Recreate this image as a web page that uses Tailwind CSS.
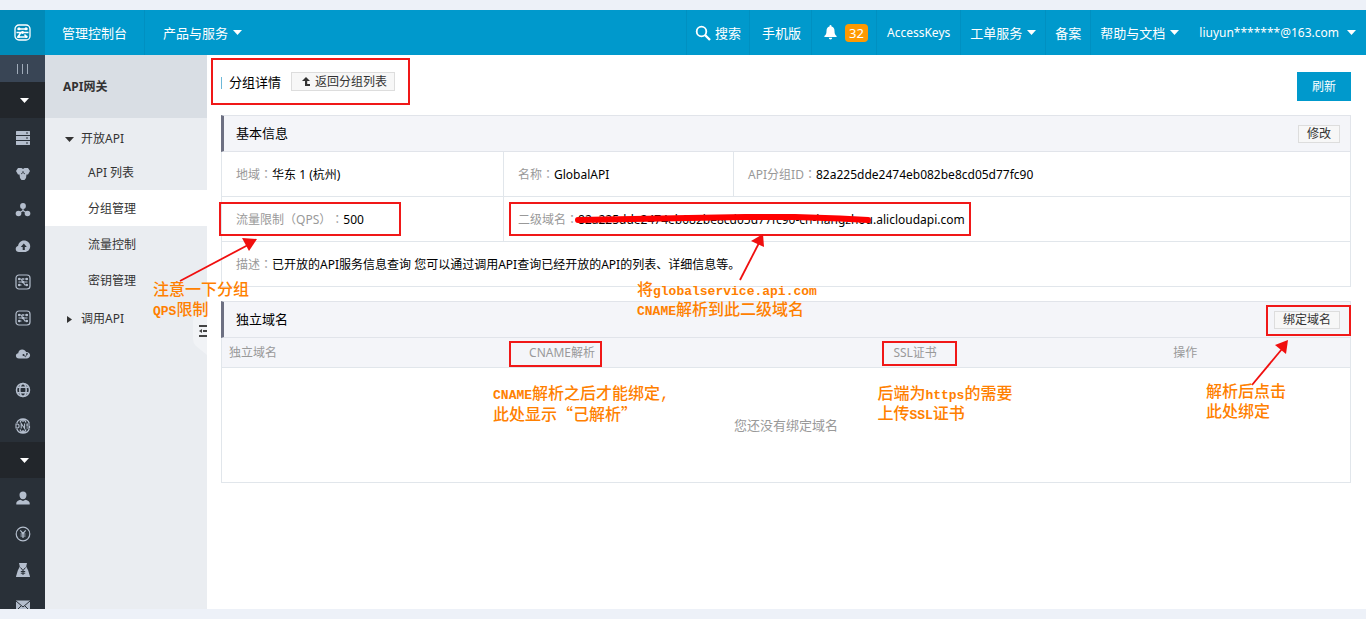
<!DOCTYPE html>
<html lang="zh-CN">
<head>
<meta charset="utf-8">
<meta name="viewport" content="width=device-width, initial-scale=1">
<title>API网关 - 分组详情</title>
<script src="https://cdn.jsdelivr.net/npm/@tailwindcss/browser@4"></script>
</head>
<body class="flex h-screen flex-col overflow-hidden bg-[#edf1f8] py-[10px] font-['Noto_Sans','Noto_Sans_CJK_SC',sans-serif] text-[12px] leading-[18px] text-[#333]">

<svg class="hidden" aria-hidden="true">
  <symbol id="caret" viewBox="0 0 9 5"><path d="M0 0h9L4.500 5z" fill="currentColor"/></symbol>
  <symbol id="gateway" viewBox="0 0 16 16"><rect x="1" y="1" width="14" height="14" rx="3" fill="none" stroke="currentColor" stroke-width="1.200"/><path d="M3 5h3.500M9.500 5H13M3 11h3.500M9.500 11H13M3.500 8h9M6 5l4 6" stroke="currentColor" stroke-width="1.200" fill="none"/><g fill="currentColor"><circle cx="4.200" cy="5" r="1.200"/><circle cx="8" cy="5" r="1"/><circle cx="11.800" cy="5" r="1.200"/><circle cx="4.200" cy="11" r="1.200"/><circle cx="8" cy="8" r="1.300"/><circle cx="11.800" cy="11" r="1.200"/></g></symbol>
</svg>

<header class="flex h-[45px] shrink-0 bg-[#0099cc] text-[13px] text-white">
  <a href="#" aria-label="首页" class="flex w-[45px] items-center justify-center bg-[#008ab8]">
    <svg class="size-[17px]" viewBox="0 0 17 17" fill="none" stroke="currentColor"><rect x="1" y="1" width="15" height="15" rx="4" stroke-width="1.300"/><path d="M3.500 5h10M2.500 8.500h12M6.500 9L4 13h8.500M10.500 10.500l2.500 3" stroke-width="1.500"/><g fill="currentColor" stroke="none"><circle cx="5" cy="4.800" r="1.500"/><circle cx="12" cy="4.800" r="1.500"/><circle cx="8.500" cy="8.500" r="1.400"/><circle cx="4.700" cy="12.700" r="1.300"/><circle cx="12.300" cy="12.700" r="1.300"/></g></svg>
  </a>
  <nav class="flex flex-1">
    <a href="#" class="flex items-center border-r border-[#0090c1] px-[17px]">管理控制台</a>
    <a href="#" class="flex items-center gap-[5px] px-[18px]">产品与服务 <svg class="h-[5px] w-[9px]"><use href="#caret"/></svg></a>
    <div class="ml-auto flex">
      <a href="#" class="flex items-center gap-1 border-x border-[#0090c1] px-2">
        <svg class="size-4" viewBox="0 0 16 16" fill="none" stroke="currentColor"><circle cx="6.500" cy="6.500" r="4.800" stroke-width="1.800"/><path d="M10 10l5 5" stroke-width="2.400"/></svg>搜索</a>
      <a href="#" class="flex items-center border-r border-[#0090c1] pl-3 pr-[10px]">手机版</a>
      <a href="#" aria-label="消息 32" class="flex items-center gap-2 border-r border-[#0090c1] pl-3 pr-2">
        <svg class="h-[15px] w-[13px]" viewBox="0 0 13 15" fill="currentColor"><path d="M6.500 0a1 1 0 0 1 1 1v.6C9.500 2.100 10.500 3.700 10.500 6c0 3 .8 4.200 2.100 5v1H.4v-1C1.700 10.200 2.500 9 2.500 6c0-2.300 1-3.900 3-4.400V1a1 1 0 0 1 1-1zM4.800 12.800h3.400a1.700 1.700 0 0 1-3.400 0z"/></svg>
        <span class="rounded bg-[#ff9900] px-1">32</span></a>
      <a href="#" class="flex items-center border-r border-[#0090c1] px-[10px] text-[12px]">AccessKeys</a>
      <a href="#" class="flex items-center gap-[5px] border-r border-[#0090c1] px-[9px]">工单服务 <svg class="h-[5px] w-[9px]"><use href="#caret"/></svg></a>
      <a href="#" class="flex items-center border-r border-[#0090c1] px-[9px]">备案</a>
      <a href="#" class="flex items-center gap-[5px] px-[9px]">帮助与文档 <svg class="h-[5px] w-[9px]"><use href="#caret"/></svg></a>
      <a href="#" class="flex items-center gap-2 pl-[11px] pr-[10px] text-[12px]">liuyun*******@163.com <svg class="h-[5px] w-[9px]"><use href="#caret"/></svg></a>
    </div>
  </nav>
</header>

<div class="flex min-h-0 flex-1">
  <nav aria-label="产品" class="flex w-[45px] shrink-0 flex-col overflow-hidden bg-[#293038] text-[#b4becd]">
    <button aria-label="收起" class="flex h-[27px] shrink-0 items-center justify-center gap-1 bg-[#394555]"><i class="h-[10px] w-px bg-[#a0abb9]"></i><i class="h-[10px] w-px bg-[#a0abb9]"></i><i class="h-[10px] w-px bg-[#a0abb9]"></i></button>
    <button aria-label="产品列表" class="flex h-9 shrink-0 items-center justify-center bg-[#22262b] pl-[3px] text-white"><svg class="h-[5px] w-[9px]"><use href="#caret"/></svg></button>
    <a href="#" aria-label="服务器" class="flex h-9 shrink-0 items-center justify-center pt-1"><svg class="size-4" viewBox="0 0 16 16"><path fill="currentColor" d="M1.500 1h13a.5.5 0 0 1 .5.500V5H1V1.500A.5.5 0 0 1 1.500 1zM1 6h14v4H1zM1 11h14v3.500a.5.5 0 0 1-.5.500h-13a.5.5 0 0 1-.5-.500z"/><path d="M11 3h2M11 8h2M11 13h2" stroke="#293038"/></svg></a>
    <a href="#" aria-label="数据库" class="flex h-9 shrink-0 items-center justify-center pt-1"><svg class="size-4" viewBox="0 0 16 16"><path fill="currentColor" d="M3 2h3.500L8 3 9.500 2H13l2 3-2 3.500h-1.500L11 12l-1.500 2h-3L5 12l-.5-3.500H3L1 5z"/><path d="M8 6.500l-2 1.500M8 6.500l2 1.500M8 5v1.500" stroke="#293038" stroke-width=".8"/></svg></a>
    <a href="#" aria-label="负载均衡" class="flex h-9 shrink-0 items-center justify-center pt-1"><svg class="size-4" viewBox="0 0 16 16"><g fill="currentColor"><circle cx="8" cy="4" r="2.900"/><circle cx="3.500" cy="11.500" r="2.800"/><circle cx="12.500" cy="11.500" r="2.800"/></g><path d="M8 4v4.500M8 8.500l-4.500 3M8 8.500l4.500 3" stroke="currentColor" stroke-width="1.200"/></svg></a>
    <a href="#" aria-label="存储" class="flex h-9 shrink-0 items-center justify-center pt-1"><svg class="size-4" viewBox="0 0 16 16"><path fill="currentColor" d="M4 14C2 14 .7 12.700.7 11c0-1.500 1-2.600 2.400-2.900C3.300 5 5.800 2.500 9 2.500c3.500 0 6.200 2.500 6.200 5.700 0 3.300-2.500 5.800-5.700 5.800z"/><path fill="#293038" d="M8.800 5.500L5.800 9h1.900v3h2.100V9h2z"/></svg></a>
    <a href="#" aria-label="API网关" class="flex h-9 shrink-0 items-center justify-center pt-1"><svg class="size-4"><use href="#gateway"/></svg></a>
    <a href="#" aria-label="网关" class="flex h-9 shrink-0 items-center justify-center pt-1"><svg class="size-4"><use href="#gateway"/></svg></a>
    <a href="#" aria-label="云监控" class="flex h-9 shrink-0 items-center justify-center pt-1"><svg class="size-4" viewBox="0 0 16 16"><path fill="currentColor" d="M4 12.500C2 12.500.9 11.300.9 9.800c0-1.400 1-2.400 2.300-2.500C3.400 5 5 3.500 7.200 3.500c1.900 0 3.200 1 3.900 2.500 2.300 0 4 1.300 4 3.300s-1.500 3.200-3.500 3.200z"/><circle cx="8.500" cy="9" r="1" fill="#293038"/><circle cx="12" cy="7.800" r=".9" fill="#293038"/><path d="M8.500 9l2 1.800L12 7.800" stroke="#293038" stroke-width=".8" fill="none"/></svg></a>
    <a href="#" aria-label="CDN" class="flex h-9 shrink-0 items-center justify-center pt-1"><svg class="size-4" viewBox="0 0 16 16" fill="none" stroke="currentColor" stroke-width="1.500"><circle cx="8" cy="8" r="6.500"/><ellipse cx="8" cy="8" rx="3.200" ry="6.500"/><path d="M2.500 5.300h11M2.500 10.700h11"/></svg></a>
    <a href="#" aria-label="DNS" class="flex h-9 shrink-0 items-center justify-center pt-1"><svg class="size-4" viewBox="0 0 16 16" fill="none" stroke="currentColor" stroke-width="1.300"><path d="M1.800 5a6.700 6.700 0 0 1 12.400 0M1.800 11a6.700 6.700 0 0 0 12.400 0M8 1.300V4M8 12v2.700M5 4.500C5.500 3 6.500 1.500 8 1.300c1.500.2 2.500 1.700 3 3.200M5 11.500c.5 1.500 1.500 3 3 3.200 1.500-.2 2.500-1.700 3-3.200"/><path d="M1 6v4h1.800l1.200-1V7L2.800 6zM6.200 10.500v-5l3.400 5v-5M15 6h-3v2h2.500v2h-3" stroke-width="1.100"/></svg></a>
    <button aria-label="用户中心" class="flex h-9 shrink-0 items-center justify-center bg-[#22262b] pl-[3px] text-white"><svg class="h-[5px] w-[9px]"><use href="#caret"/></svg></button>
    <a href="#" aria-label="账号" class="flex h-9 shrink-0 items-center justify-center pt-1"><svg class="size-4" viewBox="0 0 16 16" fill="currentColor"><path d="M8 1.500c2.300 0 3.500 1.400 3.500 3.500S10.300 9.300 8 9.300 4.500 7.100 4.500 5 5.700 1.500 8 1.500zM1.300 14.500V13c0-1.700 2.200-2.800 4.200-3.300L8 11l2.500-1.300c2 .5 4.200 1.600 4.200 3.300v1.500z"/></svg></a>
    <a href="#" aria-label="费用" class="flex h-9 shrink-0 items-center justify-center pt-1"><svg class="size-4" viewBox="0 0 16 16" fill="none" stroke="currentColor" stroke-width="1.200"><circle cx="8" cy="8" r="6.800"/><path d="M5.300 4.300L8 7.500l2.700-3.200M8 7.500V12M5.500 8h5M5.500 10h5"/></svg></a>
    <a href="#" aria-label="备案" class="flex h-9 shrink-0 items-center justify-center pt-1"><svg class="size-4" viewBox="0 0 16 16"><path fill="currentColor" d="M4 1h8l-.8 3.500 2 4L15 14.500a.5.500 0 0 1-.5.500h-13a.5.500 0 0 1-.5-.500l1.800-6 2-4z"/><path d="M5.500 5.500L8 8.500l2.500-3M8 8.500V13M5.800 9.500h4.400M5.800 11.200h4.400" stroke="#293038" fill="none"/></svg></a>
    <a href="#" aria-label="消息" class="flex h-9 shrink-0 items-center justify-center pt-1"><svg class="size-4" viewBox="0 0 16 16"><path fill="currentColor" d="M1 2.500h14v11H1z"/><path d="M1 3l7 6 7-6M1 13l5-5M15 13l-5-5" stroke="#293038" fill="none"/></svg></a>
  </nav>

  <aside class="relative w-[162px] shrink-0 bg-[#eaedf1]">
    <h2 class="flex h-[63px] items-center bg-[#d9dee4] pl-[18px] font-bold">API网关</h2>
    <nav aria-label="API网关">
      <a href="#" class="flex h-9 items-center gap-[7px] pl-5 pt-[6px]"><svg class="h-[5px] w-[9px]"><use href="#caret"/></svg>开放API</a>
      <a href="#" class="flex h-9 items-center pl-[43px] pt-[2px]">API 列表</a>
      <a href="#" aria-current="page" class="flex h-9 items-center bg-white pl-[43px] pt-[2px]">分组管理</a>
      <a href="#" class="flex h-9 items-center pl-[43px] pt-[2px]">流量控制</a>
      <a href="#" class="flex h-9 items-center pl-[43px] pt-[2px]">密钥管理</a>
      <a href="#" class="flex h-10 items-center gap-[9px] pl-[22px] pt-[2px]"><svg class="h-[7px] w-[5px]" viewBox="0 0 5 7"><path d="M0 0l5 3.500L0 7z" fill="currentColor"/></svg>调用API</a>
    </nav>
    <button aria-label="折叠菜单" class="absolute right-0 top-[250px] h-[50px] w-[14px]">
      <svg class="h-[50px] w-[14px]" viewBox="0 0 14 50"><path d="M14 0v50L3 41Q0 38 0 34V16Q0 12 3 9z" fill="#f1f3f6"/><path d="M6 21h8M6 31h8M10 26h4" stroke="#444" stroke-width="2"/><path d="M9 24v4l-3-2z" fill="#444"/></svg>
    </button>
  </aside>

  <main class="relative min-w-0 flex-1 bg-white pl-[14px] pr-[15px]">
    <div class="flex h-[60px] items-start justify-between pt-[17px]">
      <div class="relative flex items-center">
        <h1 class="flex items-center text-[13px] text-black"><i class="mr-[7px] mt-[2px] h-3 w-px bg-[#6cb8d8]"></i>分组详情</h1>
        <button class="ml-[10px] flex h-[19px] items-center gap-1 border border-[#ddd] bg-[#f7f7f7] pl-[9px] pr-[7px]"><svg class="h-[9px] w-[10px]" viewBox="0 0 10 9"><path d="M5 0l4 4H6.200v3H9v2H4V4H1z" fill="#333"/></svg>返回分组列表</button>
        <span class="pointer-events-none absolute -bottom-[14px] -left-[10px] -right-[15px] -top-[14px] border-2 border-[#f01818]"></span>
      </div>
      <button class="h-[29px] bg-[#0099cc] px-[15px] text-[12px] text-white">刷新</button>
    </div>

    <section>
      <div class="flex h-[37px] items-center justify-between border border-l-[3px] border-[#e1e4ea] border-l-[#6d7082] bg-[#f4f5f9] pl-3 pr-[10px]">
        <h2 class="pb-[2px] text-[13px] text-black">基本信息</h2>
        <button class="flex h-[18px] items-center border border-[#ddd] bg-[#f7f7f7] px-2">修改</button>
      </div>
      <dl class="grid grid-cols-[25fr_20.4fr_54.6fr] border-x border-[#e1e6eb] text-black *:flex *:h-[45px] *:items-center *:border-b *:border-[#e1e6eb] *:pl-[14px] *:pt-[2px]">
        <div class="border-r"><dt class="text-[#999]">地域<span lang="zh-TW" class="font-['Noto_Sans_CJK_TC',sans-serif] leading-none">：</span></dt><dd>华东 1 (杭州)</dd></div>
        <div class="border-r"><dt class="text-[#999]">名称<span lang="zh-TW" class="font-['Noto_Sans_CJK_TC',sans-serif] leading-none">：</span></dt><dd>GlobalAPI</dd></div>
        <div><dt class="text-[#999]">API分组ID<span lang="zh-TW" class="font-['Noto_Sans_CJK_TC',sans-serif] leading-none">：</span></dt><dd>82a225dde2474eb082be8cd05d77fc90</dd></div>
        <div class="relative border-r">
          <dt class="text-[#999]">流量限制<span lang="zh-TW" class="font-['Noto_Sans_CJK_TC',sans-serif] leading-none">（</span>QPS<span lang="zh-TW" class="inline-block font-['Noto_Sans_CJK_TC',sans-serif] leading-none">）</span><span lang="zh-TW" class="inline-block font-['Noto_Sans_CJK_TC',sans-serif] leading-none">：</span></dt><dd>500</dd>
          <span class="pointer-events-none absolute -left-[3px] top-[5px] h-[34px] w-[182px] border-2 border-[#f01818]"></span>
          <svg class="absolute -left-[47px] top-[39px] z-10 h-[50px] w-[90px]" viewBox="0 0 90 50"><path d="M5 45L73 9" stroke="#f00f0f" stroke-width="1.800"/><path d="M82 3L67 2l7 13z" fill="#f00f0f"/></svg>
          <p class="absolute -left-[69px] top-[84px] z-10 whitespace-nowrap font-['Liberation_Mono','Noto_Sans_CJK_SC',monospace] text-[16px] leading-[20px] text-[#ff8000]"><span class="block h-5 font-medium">注意一下分组</span><span class="block h-5 font-medium"><span class="text-[13px] font-bold leading-none">QPS</span>限制</span></p>
        </div>
        <div class="relative col-span-2">
          <dt class="text-[#999]">二级域名<span lang="zh-TW" class="font-['Noto_Sans_CJK_TC',sans-serif] leading-none">：</span></dt><dd class="whitespace-nowrap">82a225dde2474eb082be8cd05d77fc90-cn-hangzhou.alicloudapi.com</dd>
          <span class="pointer-events-none absolute left-[5px] top-[5px] h-[34px] w-[462px] border-2 border-[#f01818]"></span>
          <svg class="absolute left-[66px] top-[13px] h-[18px] w-[305px]" viewBox="0 0 305 18"><path d="M8 10L90 8.500L175 7H225L270 8.500L298 10" fill="none" stroke="red" stroke-width="6" stroke-linecap="round" stroke-linejoin="round"/></svg>
          <svg class="absolute left-[226px] top-[33px] z-10 h-[55px] w-[45px]" viewBox="0 0 45 55"><path d="M10 50L29 13" stroke="#f00f0f" stroke-width="1.800"/><path d="M33 4L21 11l13 6z" fill="#f00f0f"/></svg>
          <p class="absolute left-[133px] top-[84px] z-10 whitespace-nowrap font-['Liberation_Mono','Noto_Sans_CJK_SC',monospace] text-[16px] leading-[20px] text-[#ff8000]"><span class="block h-5 font-medium">将<span class="text-[13px] font-bold leading-none">globalservice.api.com</span></span><span class="block h-5 font-medium"><span class="text-[13px] font-bold leading-none">CNAME</span>解析到此二级域名</span></p>
        </div>
        <div class="col-span-3"><dt class="text-[#999]">描述<span lang="zh-TW" class="font-['Noto_Sans_CJK_TC',sans-serif] leading-none">：</span></dt><dd>已开放的API服务信息查询 您可以通过调用API查询已经开放的API的列表、详细信息等。</dd></div>
      </dl>
    </section>

    <section class="mt-[14px]">
      <div class="flex h-[37px] items-center justify-between border border-l-[3px] border-[#e1e4ea] border-l-[#6d7082] bg-[#f4f5f9] pl-3 pr-[10px]">
        <h2 class="pb-[2px] text-[13px] text-black">独立域名</h2>
        <div class="relative">
          <button class="flex h-[18px] items-center border border-[#ddd] bg-[#f7f7f7] px-2">绑定域名</button>
          <span class="pointer-events-none absolute -bottom-[7px] -left-[8px] -right-[11px] -top-[6px] border-2 border-[#f01818]"></span>
          <svg class="absolute right-[45px] top-[25px] z-10 h-[55px] w-[50px]" viewBox="0 0 50 55"><path d="M7 49L37 13" stroke="#f00f0f" stroke-width="1.800"/><path d="M43 4L30 9l11 9z" fill="#f00f0f"/></svg>
          <p class="absolute right-[54px] top-[72px] z-10 whitespace-nowrap font-['Liberation_Mono','Noto_Sans_CJK_SC',monospace] text-[16px] leading-[20px] text-[#ff8000]"><span class="block h-5 font-medium">解析后点击</span><span class="block h-5 font-medium">此处绑定</span></p>
        </div>
      </div>
      <table class="w-full table-fixed border-separate border-spacing-0 border border-t-0 border-[#e1e6eb] text-[#999]">
        <thead class="bg-[#f4f5f9]">
          <tr class="h-[30px] text-left *:border-b *:border-[#e1e6eb] *:pl-[7px] *:font-normal">
            <th class="w-[26.6%]">独立域名</th>
            <th class="relative w-[32.3%]">CNAME解析
              <span class="pointer-events-none absolute -left-[13px] top-[3px] h-[26px] w-[93px] border-2 border-[#f01818]"></span>
              <p class="absolute -left-[29px] top-[47px] whitespace-nowrap font-['Liberation_Mono','Noto_Sans_CJK_SC',monospace] text-[16px] leading-[20px] text-[#ff8000]"><span class="block h-5 font-medium"><span class="text-[13px] font-bold leading-none">CNAME</span>解析之后才能绑定,</span><span class="block h-5 font-medium">此处显示<span class="font-['Noto_Sans_CJK_SC',sans-serif] leading-none">“</span>己解析<span class="font-['Noto_Sans_CJK_SC',sans-serif] leading-none">”</span></span></p></th>
            <th class="relative w-[24.8%]">SSL证书
              <span class="pointer-events-none absolute -left-[4px] top-[3px] h-[25px] w-[75px] border-2 border-[#f01818]"></span>
              <p class="absolute -left-[9px] top-[47px] whitespace-nowrap font-['Liberation_Mono','Noto_Sans_CJK_SC',monospace] text-[16px] leading-[20px] text-[#ff8000]"><span class="block h-5 font-medium">后端为<span class="text-[13px] font-bold leading-none">https</span>的需要</span><span class="block h-5 font-medium">上传<span class="text-[13px] font-bold leading-none">SSL</span>证书</span></p></th>
            <th>操作</th>
          </tr>
        </thead>
        <tbody><tr><td colspan="4" class="h-[114px] text-center text-[13px]">您还没有绑定域名</td></tr></tbody>
      </table>
    </section>
  </main>
</div>
</body>
</html>
